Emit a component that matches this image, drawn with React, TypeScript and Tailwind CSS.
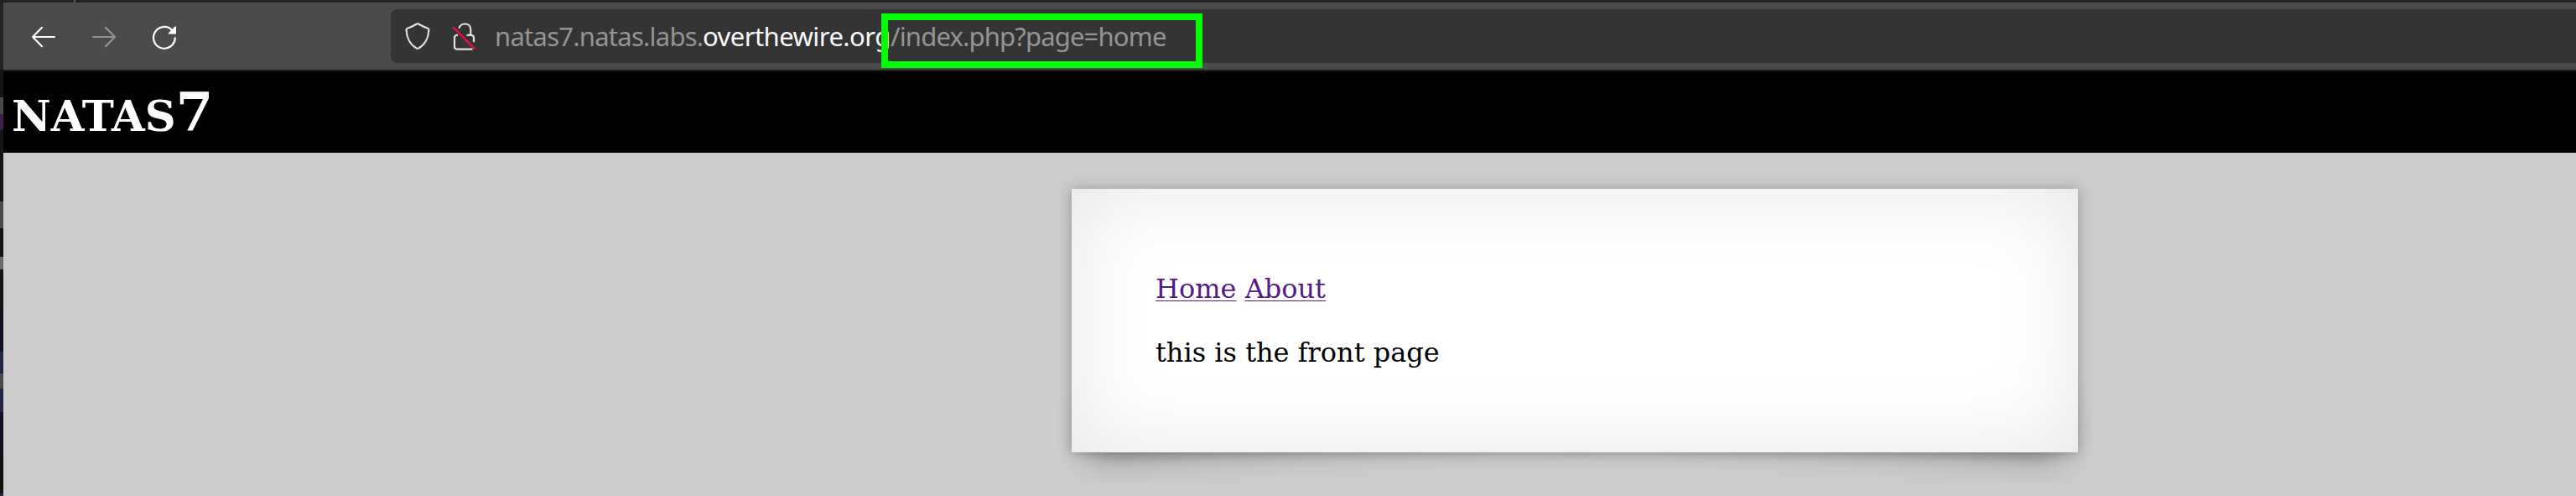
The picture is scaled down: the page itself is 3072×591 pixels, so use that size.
const EDGE: [string, number][] = [
  ["bg-[#222222]", 83],
  ["bg-[#161616]", 33],
  ["bg-[#4a4a4a]", 20],
  ["bg-[#3d1f4a]", 16],
  ["bg-[#20294f]", 3],
  ["bg-[#161616]", 85],
  ["bg-[#4a4a4a]", 32],
  ["bg-[#161511]", 34],
  ["bg-[#6b6b6b]", 15],
  ["bg-[#161511]", 50],
  ["bg-[#141022]", 48],
  ["bg-[#222749]", 26],
  ["bg-[#4a4a4a]", 18],
  ["bg-[#222749]", 28],
  ["bg-[#141022]", 48],
  ["bg-[#13120e]", 49],
  ["bg-[#222749]", 3],
];

function Arrow({ className }: { className: string }) {
  return (
    <svg className={className} width="32" height="32" viewBox="0 0 32 32" fill="none" stroke="currentColor" strokeWidth="2.2" strokeLinecap="round" strokeLinejoin="round">
      <path d="M29 17H3M14 5.8L3 17l11 11.2" />
    </svg>
  );
}

function Reload() {
  return (
    <svg className="text-[#fbfbfe]" width="32" height="32" viewBox="0 0 32 32" fill="none">
      <path d="M28.8 18.300A12.900 12.900 0 1 1 25 8.700" stroke="currentColor" strokeWidth="2.3" strokeLinecap="round" />
      <path d="M30 5v8.600h-8.600a.8.8 0 0 1-.5-1.400l7.800-7.700a.8.8 0 0 1 1.300.5z" fill="currentColor" />
    </svg>
  );
}

function Shield() {
  return (
    <svg width="32" height="34" viewBox="0 0 32 34" fill="none" stroke="#e2e2e4" strokeWidth="2.2" strokeLinejoin="round">
      <path d="M15 2.500C11.500 4.600 7.500 6.600 3.900 7.700c-.9.3-1.400 1-1.300 2C3 18.500 7 27.300 14.600 31.400q1.400.7 2.800 0C25 27.300 29 18.500 29.400 9.700c.1-1-.4-1.700-1.300-2C24.500 6.600 20.500 4.600 17 2.500q-1-.5-2 0z" />
    </svg>
  );
}

function Lock() {
  return (
    <svg width="32" height="34" viewBox="0 0 32 34" fill="none" strokeLinecap="round">
      <path d="M9.500 7.800C11.200.5 23.300.5 23.300 9.300v6.200M18.500 15.800h5.500a3 3 0 0 1 3 3v5.500M8 15.800H7a3 3 0 0 0-3 3v10.800a3 3 0 0 0 3 3h18.500" stroke="#e2e2e4" strokeWidth="2.200" strokeLinecap="butt" />
      <path d="M2.500 6.500L28 32" stroke="#f1103f" strokeWidth="2.400" />
    </svg>
  );
}

export default function App() {
  return (
    <div className="flex h-[591px] w-[3072px] overflow-hidden bg-[#cccccc]">
      <div className="flex w-1 shrink-0 flex-col overflow-hidden">
        {EDGE.map(([color, height], i) => (
          <div key={i} className={`${color} shrink-0`} style={{ height }} />
        ))}
      </div>
      <div className="flex min-w-0 flex-1 flex-col">
        <div className="h-[3px] bg-[#222222] pl-[84px]">
          <div className="h-[3px] w-[2px] bg-[#5a5a5a]" />
        </div>
        <div className="flex h-20 items-center bg-[#4b4b4b] pl-[32px]">
          <div className="flex w-[430px] items-center gap-[40px]">
            <Arrow className="text-[#fbfbfe]" />
            <Arrow className="-scale-x-100 text-[#919191]" />
            <Reload />
          </div>
          <div className="relative flex h-16 flex-1 items-center rounded-l-lg bg-[#343434] pl-[16px]">
            <Shield />
            <div className="ml-[24px]">
              <Lock />
            </div>
            <div className="ml-[20px] flex whitespace-pre font-['Noto_Sans',sans-serif] text-[31px] leading-[64px] text-[#949494]">
              <span className="w-[248px] tracking-[-0.75px]">natas7.natas.labs.</span>
              <span className="w-[224px] tracking-[-0.55px] text-[#fbfbfe]">overthewire.org</span>
              <span className="tracking-[-0.83px]">/index.php?page=home</span>
            </div>
            <div className="absolute left-[585px] top-[5px] h-[65px] w-[383px] border-8 border-[#00ff00]" />
          </div>
        </div>
        <div className="h-[2px] bg-[#1b1b1b]" />
        <h1 className="flex h-[97px] items-baseline bg-black pl-[10px] font-['DejaVu_Serif',serif] text-[64px] font-bold leading-[97px] text-white">
          <span className="text-[51.2px]">NATAS</span>
          <span>7</span>
        </h1>
        <main className="flex-1 pl-[1274px] pt-[43px]">
          <div className="relative isolate h-[314px] w-[1200px]">
            <div className="absolute bottom-[30px] left-[20px] -z-10 h-[20%] w-1/2 -rotate-3 shadow-[0_19px_36px_rgba(0,0,0,0.38)]" />
            <div className="absolute bottom-[30px] right-[20px] -z-10 h-[20%] w-1/2 rotate-3 shadow-[0_19px_36px_rgba(0,0,0,0.38)]" />
            <div className="h-full bg-white px-[100px] pt-[100px] font-['DejaVu_Serif',serif] text-[32px] leading-[38px] text-black shadow-[0_1px_14px_rgba(0,0,0,0.28),inset_0_0_101px_rgba(0,0,0,0.1)]">
              <p className="text-[#551a8b]">
                <a className="underline decoration-1 underline-offset-[3px]">Home</a>{" "}
                <a className="underline decoration-1 underline-offset-[3px]">About</a>
              </p>
              <p className="pt-[38px]">this is the front page</p>
            </div>
          </div>
        </main>
      </div>
    </div>
  );
}
